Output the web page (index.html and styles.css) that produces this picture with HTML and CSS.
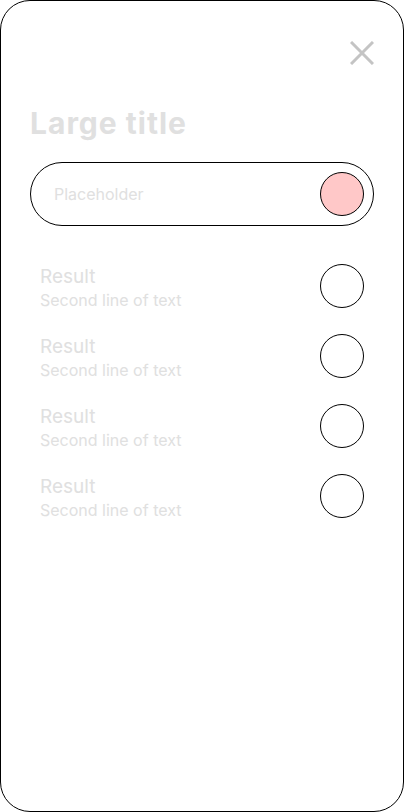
FILE: index.html
```html
<!DOCTYPE html>
<html>
<head>
<meta charset="utf-8">
<link rel="stylesheet" href="styles.css">
</head>
<body>
<div class="frame">
  <div class="top">
    <svg class="close" width="24" height="24" viewBox="0 0 24 24"><path d="M1 1 L23 23 M23 1 L1 23" stroke="#c4c4c4" stroke-width="3" fill="none"/></svg>
  </div>
  <h1 class="title">Large title</h1>
  <div class="search">
    <span class="placeholder">Placeholder</span>
    <span class="dot pink"></span>
  </div>
  <ul class="results">
    <li class="row"><div class="texts"><div class="main">Result</div><div class="sub">Second line of text</div></div><span class="dot"></span></li>
    <li class="row"><div class="texts"><div class="main">Result</div><div class="sub">Second line of text</div></div><span class="dot"></span></li>
    <li class="row"><div class="texts"><div class="main">Result</div><div class="sub">Second line of text</div></div><span class="dot"></span></li>
    <li class="row"><div class="texts"><div class="main">Result</div><div class="sub">Second line of text</div></div><span class="dot"></span></li>
  </ul>
</div>
</body>
</html>
```
FILE: styles.css
```css
* { box-sizing: border-box; }
html, body { margin: 0; padding: 0; background: #fff; }
body { font-family: Inter, Roboto, "Noto Sans", sans-serif; }
.frame {
  width: 404px;
  height: 812px;
  border: 1px solid #000;
  border-radius: 30px;
  padding: 0 29px;
  display: flex;
  flex-direction: column;
}
.top {
  display: flex;
  justify-content: flex-end;
  padding-top: 40px;
}
.close { display: block; }
.title {
  margin: 40px 0 0 0;
  font-size: 30px;
  line-height: 36px;
  font-weight: 700;
  letter-spacing: 1px;
  color: #e0e0e0;
}
.search {
  margin-top: 21px;
  height: 64px;
  border: 1px solid #000;
  border-radius: 32px;
  display: flex;
  align-items: center;
  justify-content: space-between;
  padding: 0 9px 0 23px;
}
.placeholder {
  font-size: 16px;
  color: #e0e0e0;
}
.dot {
  width: 44px;
  height: 44px;
  border: 1px solid #000;
  border-radius: 50%;
  flex: none;
}
.dot.pink { background: #ffc8c8; }
.results {
  list-style: none;
  margin: 25px 0 0 0;
  padding: 0 10px;
}
.row {
  height: 70px;
  display: flex;
  align-items: center;
  justify-content: space-between;
}
.texts { padding-top: 3px; }
.main {
  font-size: 19px;
  line-height: 24px;
  color: #e0e0e0;
}
.sub {
  font-size: 16px;
  line-height: 22px;
  color: #e0e0e0;
}
```
